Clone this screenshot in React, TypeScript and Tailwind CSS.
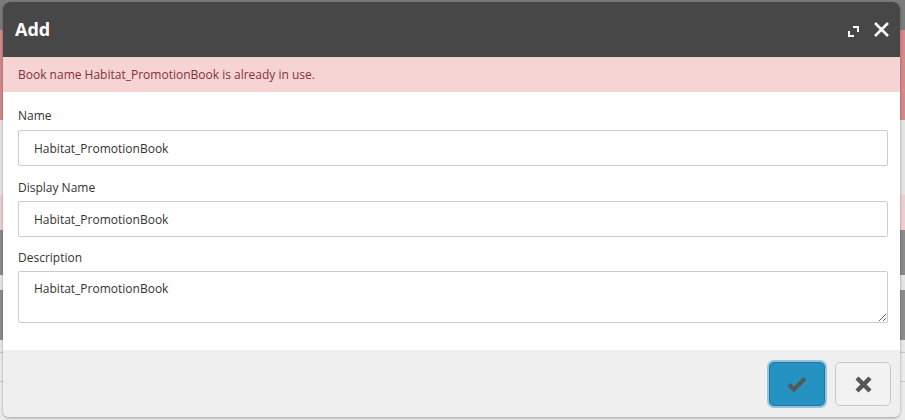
import { useState } from "react";

function ExpandIcon() {
  return (
    <svg width="11" height="11" viewBox="0 0 11 11" fill="none">
      <path d="M5 1h5v5" stroke="#fff" strokeWidth="2" />
      <path d="M1 5v5h5" stroke="#fff" strokeWidth="2" />
    </svg>
  );
}

function CloseIcon() {
  return (
    <svg width="17" height="17" viewBox="0 0 17 17" fill="none">
      <path d="M2 2l13 13M15 2L2 15" stroke="#fff" strokeWidth="2.6" />
    </svg>
  );
}

function CheckIcon() {
  return (
    <svg width="20" height="16" viewBox="0 0 20 16" fill="none">
      <path d="M2 8.5l5 5L18 2.5" stroke="#575757" strokeWidth="4" />
    </svg>
  );
}

function CrossIcon() {
  return (
    <svg width="19" height="19" viewBox="0 0 19 19" fill="none">
      <path d="M3 3l13 13M16 3L3 16" stroke="#575757" strokeWidth="4.4" />
    </svg>
  );
}

export default function App() {
  const [name, setName] = useState("Habitat_PromotionBook");
  const [displayName, setDisplayName] = useState("Habitat_PromotionBook");
  const [description, setDescription] = useState("Habitat_PromotionBook");

  return (
    <div
      className="relative h-[420px] w-[905px] overflow-hidden bg-[#e6e6e6]"
      style={{ fontFamily: '"Open Sans", "Liberation Sans", sans-serif' }}
    >
      {/* dimmed page behind the dialog */}
      <div className="flex h-full flex-col">
        <div className="h-[30px] bg-[#7b7b7b]" />
        <div className="h-[90px] bg-[#d4898a]" />
        <div className="h-[75px] bg-[#e4e4e4]" />
        <div className="h-[35px] bg-[#eccfcf]" />
        <div className="h-[45px] bg-[#8a8a8a]" />
        <div className="h-[15px] bg-[#e4e4e4]" />
        <div className="h-[50px] bg-[#8d8d8d]" />
        <div className="h-[12px] bg-[#e8e8e8]" />
        <div className="h-px bg-[#c8c8c8]" />
        <div className="h-[28px] bg-[#ececec]" />
        <div className="h-px bg-[#c8c8c8]" />
        <div className="flex-1 bg-[#ececec]" />
      </div>

      <div className="absolute left-[3px] top-[2px] flex h-[415px] w-[897px] flex-col overflow-hidden rounded-[6px] bg-white shadow-[0_1px_3px_rgba(0,0,0,0.35)]">
        <div className="flex h-[55px] shrink-0 items-center justify-between bg-[#474747] pl-[12px] pr-[10px]">
          <h1 className="text-[18px] font-bold text-white">Add</h1>
          <div className="flex items-center gap-[14px]">
            <button type="button" className="mt-[3px]">
              <ExpandIcon />
            </button>
            <button type="button">
              <CloseIcon />
            </button>
          </div>
        </div>

        <div className="flex h-[35px] shrink-0 items-center bg-[#f7d4d4] pl-[15px] text-[12px] text-[#85303a]">
          Book name Habitat_PromotionBook is already in use.
        </div>

        <div className="flex flex-1 flex-col px-[15px] pt-[15px]">
          <label className="text-[12px] leading-[17px] text-[#333]">Name</label>
          <input
            type="text"
            value={name}
            onChange={(e) => setName(e.target.value)}
            className="mt-[6px] h-[36px] w-[870px] rounded-[2px] border border-[#cccccc] px-[15px] text-[12px] text-[#333] focus:outline-none"
          />
          <label className="mt-[13px] text-[12px] leading-[17px] text-[#333]">Display Name</label>
          <input
            type="text"
            value={displayName}
            onChange={(e) => setDisplayName(e.target.value)}
            className="mt-[5px] h-[36px] w-[870px] rounded-[2px] border border-[#cccccc] px-[15px] text-[12px] text-[#333] focus:outline-none"
          />
          <label className="mt-[12px] text-[12px] leading-[17px] text-[#333]">Description</label>
          <textarea
            value={description}
            onChange={(e) => setDescription(e.target.value)}
            className="mt-[5px] h-[52px] w-[870px] rounded-[2px] border border-[#cccccc] px-[15px] pt-[8px] text-[12px] leading-[17px] text-[#333] focus:outline-none"
          />
        </div>

        <div className="flex h-[67px] shrink-0 items-start justify-end gap-[10px] bg-[#efefef] pr-[9px] pt-[12px]">
          <button
            type="button"
            className="flex h-[44px] w-[56px] items-center justify-center rounded-[5px] border border-[#1e7aa3] bg-[#2592c2] shadow-[0_0_0_2px_rgba(37,146,194,0.45)]"
          >
            <CheckIcon />
          </button>
          <button
            type="button"
            className="flex h-[44px] w-[56px] items-center justify-center rounded-[5px] border border-[#c8c8c8] bg-[#f2f2f2]"
          >
            <CrossIcon />
          </button>
        </div>
      </div>
    </div>
  );
}
